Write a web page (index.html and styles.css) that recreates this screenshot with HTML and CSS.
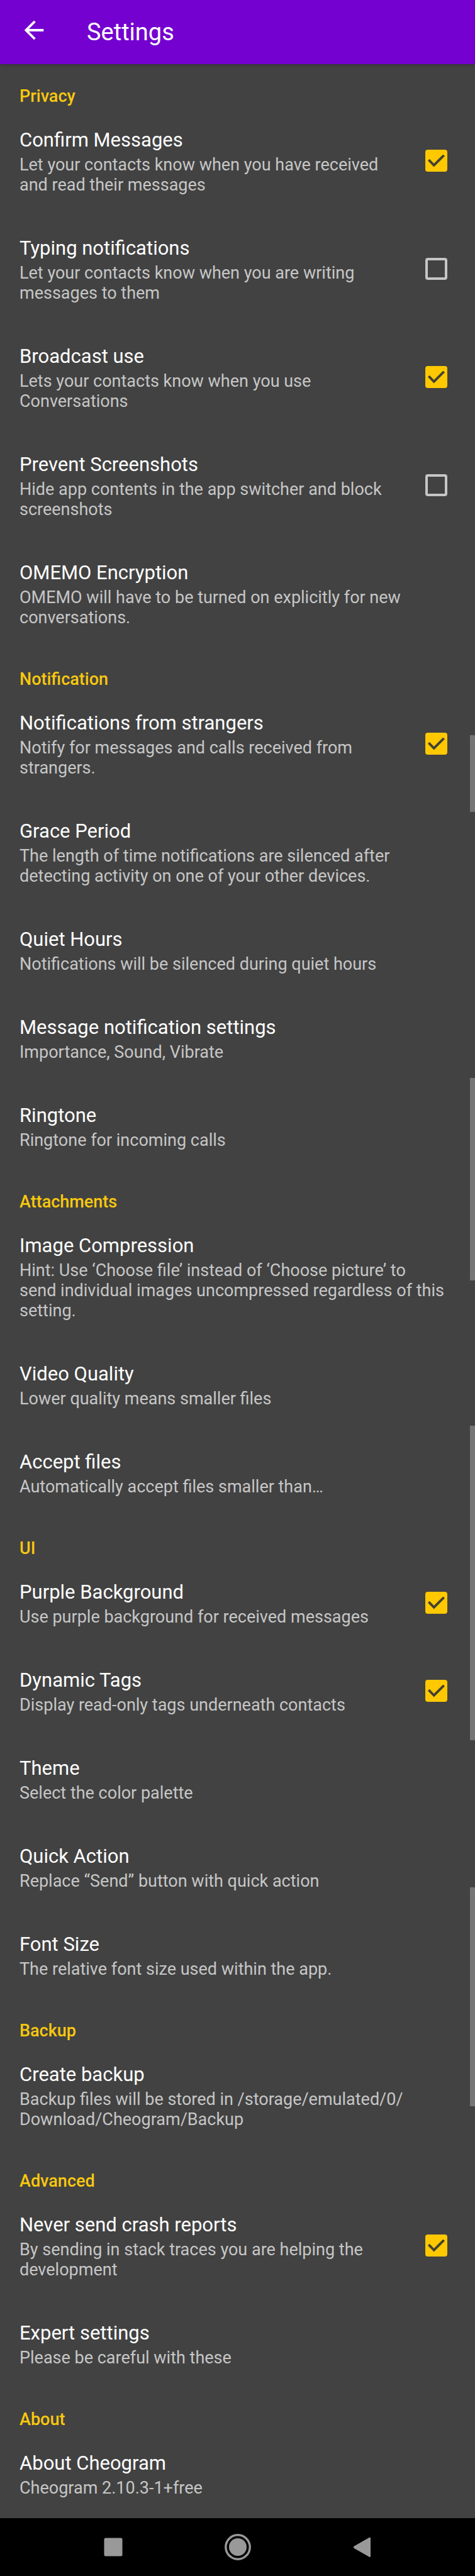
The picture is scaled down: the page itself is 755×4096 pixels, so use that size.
FILE: index.html
```
<!DOCTYPE html>
<html lang="en">
<head>
<meta charset="utf-8">
<meta name="viewport" content="width=device-width, initial-scale=1">
<title>Settings</title>
<link rel="stylesheet" href="styles.css">
</head>
<body class="screen">
<header class="toolbar">
  <button class="toolbar-back" type="button" aria-label="Navigate up">
    <svg class="toolbar-icon" viewBox="0 0 24 24" aria-hidden="true"><path fill="currentColor" d="M20 11H7.83l5.59-5.59L12 4l-8 8 8 8 1.41-1.41L7.83 13H20v-2z"/></svg>
  </button>
  <h1 class="toolbar-title">Settings</h1>
</header>
<main class="settings">
  <section>
    <h2 class="category">Privacy</h2>
    <label class="pref"><span class="pref-text"><span class="pref-title">Confirm Messages</span><span class="pref-summary">Let your contacts know when you have received and read their messages</span></span><input class="check" type="checkbox" checked></label>
    <label class="pref"><span class="pref-text"><span class="pref-title">Typing notifications</span><span class="pref-summary">Let your contacts know when you are writing messages to them</span></span><input class="check" type="checkbox"></label>
    <label class="pref"><span class="pref-text"><span class="pref-title">Broadcast use</span><span class="pref-summary">Lets your contacts know when you use Conversations</span></span><input class="check" type="checkbox" checked></label>
    <label class="pref"><span class="pref-text"><span class="pref-title">Prevent Screenshots</span><span class="pref-summary">Hide app contents in the app switcher and block screenshots</span></span><input class="check" type="checkbox"></label>
    <button class="pref" type="button"><span class="pref-text"><span class="pref-title">OMEMO Encryption</span><span class="pref-summary">OMEMO will have to be turned on explicitly for new conversations.</span></span></button>
  </section>
  <section>
    <h2 class="category">Notification</h2>
    <label class="pref"><span class="pref-text"><span class="pref-title">Notifications from strangers</span><span class="pref-summary">Notify for messages and calls received from strangers.</span></span><input class="check" type="checkbox" checked></label>
    <button class="pref" type="button"><span class="pref-text"><span class="pref-title">Grace Period</span><span class="pref-summary">The length of time notifications are silenced after detecting activity on one of your other devices.</span></span></button>
    <button class="pref" type="button"><span class="pref-text"><span class="pref-title">Quiet Hours</span><span class="pref-summary">Notifications will be silenced during quiet hours</span></span></button>
    <button class="pref" type="button"><span class="pref-text"><span class="pref-title">Message notification settings</span><span class="pref-summary">Importance, Sound, Vibrate</span></span></button>
    <button class="pref" type="button"><span class="pref-text"><span class="pref-title">Ringtone</span><span class="pref-summary">Ringtone for incoming calls</span></span></button>
  </section>
  <section>
    <h2 class="category">Attachments</h2>
    <button class="pref" type="button"><span class="pref-text"><span class="pref-title">Image Compression</span><span class="pref-summary">Hint: Use ‘Choose file’ instead of ‘Choose picture’ to send&nbsp;individual images uncompressed regardless of this setting.</span></span></button>
    <button class="pref" type="button"><span class="pref-text"><span class="pref-title">Video Quality</span><span class="pref-summary">Lower quality means smaller files</span></span></button>
    <button class="pref" type="button"><span class="pref-text"><span class="pref-title">Accept files</span><span class="pref-summary">Automatically accept files smaller than…</span></span></button>
  </section>
  <section>
    <h2 class="category">UI</h2>
    <label class="pref"><span class="pref-text"><span class="pref-title">Purple Background</span><span class="pref-summary">Use purple background for received messages</span></span><input class="check" type="checkbox" checked></label>
    <label class="pref"><span class="pref-text"><span class="pref-title">Dynamic Tags</span><span class="pref-summary">Display read-only tags underneath contacts</span></span><input class="check" type="checkbox" checked></label>
    <button class="pref" type="button"><span class="pref-text"><span class="pref-title">Theme</span><span class="pref-summary">Select the color palette</span></span></button>
    <button class="pref" type="button"><span class="pref-text"><span class="pref-title">Quick Action</span><span class="pref-summary">Replace “Send” button with quick action</span></span></button>
    <button class="pref" type="button"><span class="pref-text"><span class="pref-title">Font Size</span><span class="pref-summary">The relative font size used within the app.</span></span></button>
  </section>
  <section>
    <h2 class="category">Backup</h2>
    <button class="pref" type="button"><span class="pref-text"><span class="pref-title">Create backup</span><span class="pref-summary">Backup files will be stored in /storage/emulated/0/<wbr>Download/Cheogram/Backup</span></span></button>
  </section>
  <section>
    <h2 class="category">Advanced</h2>
    <label class="pref"><span class="pref-text"><span class="pref-title">Never send crash reports</span><span class="pref-summary">By sending in stack traces you are helping the development</span></span><input class="check" type="checkbox" checked></label>
    <button class="pref" type="button"><span class="pref-text"><span class="pref-title">Expert settings</span><span class="pref-summary">Please be careful with these</span></span></button>
  </section>
  <section>
    <h2 class="category">About</h2>
    <button class="pref" type="button"><span class="pref-text"><span class="pref-title">About Cheogram</span><span class="pref-summary">Cheogram 2.10.3-1+free</span></span></button>
  </section>
  <span class="scroll-thumb thumb-a"></span>
  <span class="scroll-thumb thumb-b"></span>
  <span class="scroll-thumb thumb-c"></span>
  <span class="scroll-thumb thumb-d"></span>
</main>
<nav class="navbar" aria-label="System">
  <button class="nav-button" type="button" aria-label="Recent apps"><svg class="nav-icon" viewBox="0 0 44 44" aria-hidden="true"><rect x="7.5" y="7.5" width="29" height="29" rx="2.5" fill="currentColor"/></svg></button>
  <button class="nav-button" type="button" aria-label="Home"><svg class="nav-icon" viewBox="0 0 44 44" aria-hidden="true"><circle cx="22" cy="22" r="19.2" fill="none" stroke="currentColor" stroke-width="3.4"/><circle cx="22" cy="22" r="14" fill="currentColor"/></svg></button>
  <button class="nav-button" type="button" aria-label="Back"><svg class="nav-icon" viewBox="0 0 44 44" aria-hidden="true"><path d="M9 20.4 32.6 6.9Q35 5.6 35 8.2V36.2Q35 38.8 32.6 37.5L9 24Q6.8 22.2 9 20.4Z" fill="currentColor"/></svg></button>
</nav>
</body>
</html>
```
FILE: styles.css
```
* {
  box-sizing: border-box;
}

.screen {
  display: flex;
  flex-direction: column;
  min-height: 100vh;
  margin: 0;
  background: #424242;
  color: #fff;
  font-family: Roboto, "Liberation Sans", sans-serif;
}

button {
  border: 0;
  padding: 0;
  background: none;
  color: inherit;
  font: inherit;
}

.toolbar {
  display: flex;
  align-items: flex-start;
  gap: 61px;
  height: 102px;
  padding: 25px 31px 0;
  background: #7401cf;
  box-shadow: 0 1px 6px rgba(0, 0, 0, 0.25);
}

.toolbar-back,
.toolbar-icon {
  display: block;
  width: 46px;
  height: 46px;
}

.toolbar-title {
  margin: 0;
  font-size: 38px;
  font-weight: 400;
  line-height: 52px;
}

.settings {
  position: relative;
  flex: 1;
  padding-top: 1px;
}

.category {
  margin: 0;
  padding: 34px 31px 1px;
  color: #f9c80e;
  font-size: 27px;
  font-weight: 500;
  line-height: 32px;
}

.pref {
  display: flex;
  align-items: center;
  gap: 32px;
  width: 100%;
  padding: 34px 31px 32px;
  text-align: left;
}

.pref-text {
  display: flex;
  flex: 1;
  flex-direction: column;
  gap: 4px;
  min-width: 0;
}

.pref-title {
  font-size: 31px;
  line-height: 38px;
}

.pref-summary {
  color: #c6c6c6;
  font-size: 27px;
  line-height: 32px;
}

.check {
  flex: none;
  width: 35px;
  height: 35px;
  margin: 0 13px 3px 0;
  border: 4px solid #c6c6c6;
  border-radius: 4px;
  appearance: none;
}

.check:checked {
  display: grid;
  place-items: center;
  border: 0;
  background: #ffc800;
}

.check:checked::before {
  content: "";
  width: 27px;
  height: 20px;
  background: #424232;
  clip-path: polygon(0 50%, 10% 36%, 36% 72%, 90% 0, 100% 14%, 36% 100%);
}

.scroll-thumb {
  position: absolute;
  right: 0;
  width: 8px;
  background: #757575;
}

.thumb-a {
  top: 1067px;
  height: 122px;
}

.thumb-b {
  top: 1612px;
  height: 322px;
}

.thumb-c {
  top: 2165px;
  height: 500px;
}

.thumb-d {
  top: 2899px;
  height: 348px;
}

.navbar {
  display: flex;
  align-items: center;
  justify-content: center;
  gap: 154px;
  height: 92px;
  background: #000;
  color: #999;
}

.nav-button,
.nav-icon {
  display: block;
  width: 44px;
  height: 44px;
}
```
